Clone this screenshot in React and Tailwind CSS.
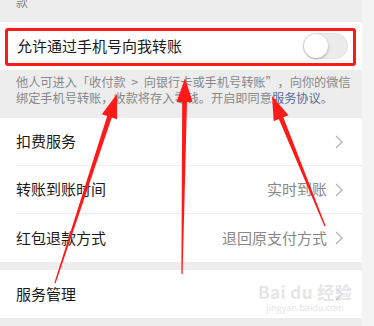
import React from "react";

// tail -> tip arrow as a polygon (computed from coordinates)
const arrowPoints = (tx, ty, hx, hy) => {
  const dx = hx - tx;
  const dy = hy - ty;
  const len = Math.sqrt(dx * dx + dy * dy);
  const ux = dx / len;
  const uy = dy / len;
  const px = -uy;
  const py = ux;
  const headLen = 24;
  const headW = 8;
  const tailW = 0.6;
  const neckW = 2.4;
  const bx = hx - ux * headLen;
  const by = hy - uy * headLen;
  const pts = [
    [tx + px * tailW, ty + py * tailW],
    [bx + px * neckW, by + py * neckW],
    [bx + px * headW, by + py * headW],
    [hx, hy],
    [bx - px * headW, by - py * headW],
    [bx - px * neckW, by - py * neckW],
    [tx - px * tailW, ty - py * tailW],
  ];
  return pts.map((p) => p.map((v) => v.toFixed(1)).join(",")).join(" ");
};

const arrows = [
  [55, 283, 117, 94],
  [182, 274, 185, 78],
  [325, 226, 272, 96],
];

const Chevron = () => (
  <svg width="8" height="14" viewBox="0 0 8 14" className="ml-[8px]">
    <path d="M1 1l6 6-6 6" fill="none" stroke="#b2b2b2" strokeWidth="1.3" />
  </svg>
);

const Row = ({ label, value, divider }) => (
  <div className="flex h-[48px] items-center bg-white pl-4">
    <div
      className={
        "flex h-full flex-1 items-center justify-between pr-[19px] " +
        (divider ? "border-b border-[#eeeeee]" : "")
      }
    >
      <span className="text-[15px] text-[#1a1a1a]">{label}</span>
      <span className="flex items-center text-[15px] text-[#888888]">
        {value}
        <Chevron />
      </span>
    </div>
  </div>
);

const App = () => {
  return (
    <div
      className="relative flex h-[326px] w-[374px] overflow-hidden bg-[#f4f4f4]"
      style={{ fontFamily: '"Noto Sans CJK SC", "Noto Sans", sans-serif' }}
    >
      <div className="w-[362px] bg-[#ededed]">
        <div className="h-[22px] overflow-hidden px-4">
          <p className="-mt-[6px] text-[12px] leading-[16px] text-[#888888]">款</p>
        </div>

        <div className="flex h-[48px] items-center justify-between bg-white pl-[17px] pr-[14px]">
          <span className="text-[15px] text-[#1a1a1a]">允许通过手机号向我转账</span>
          <div className="relative h-[26px] w-[45px] rounded-full border border-[#e2e2e2] bg-[#ececec]">
            <div className="absolute left-0 top-0 h-[24px] w-[24px] rounded-full bg-white shadow-[0_1px_3px_rgba(0,0,0,0.3)]" />
          </div>
        </div>

        <div className="h-[48px] whitespace-nowrap px-4 pt-[4px] text-[12.2px] leading-[16px] text-[#888888]">
          <p>
            他人可进入「收付款<span className="inline-block w-[18px] text-center">&gt;</span>向银行卡或手机号转账
            <span className="inline-block w-[12px]">”</span>，向你的微信
          </p>
          <p>
            绑定手机号转账，收款将存入零钱。开启即同意
            <span className="text-[#576b95]">服务协议</span>。
          </p>
        </div>

        <Row label="扣费服务" value="" divider />
        <Row label="转账到账时间" value="实时到账" divider />
        <Row label="红包退款方式" value="退回原支付方式" />

        <div className="h-[8px]" />

        <Row label="服务管理" value="" />
      </div>

      {/* watermark */}
      <div className="pointer-events-none absolute left-[258px] top-[282px] flex flex-col items-center text-[#e6e6e6]">
        <span className="text-[17px] font-bold leading-[20px] tracking-wide">Bai du 经验</span>
        <span className="text-[9px] leading-[12px]">jingyan.baidu.com</span>
      </div>

      {/* annotations */}
      <div className="pointer-events-none absolute left-[5px] top-[28px] h-[38px] w-[351px] rounded-[3px] border-[3px] border-[#ff1a1a]" />
      <svg className="pointer-events-none absolute left-0 top-0" width="374" height="326">
        {arrows.map((a, i) => (
          <polygon key={i} points={arrowPoints(...a)} fill="#ff1a1a" />
        ))}
      </svg>
    </div>
  );
};

export default App;
